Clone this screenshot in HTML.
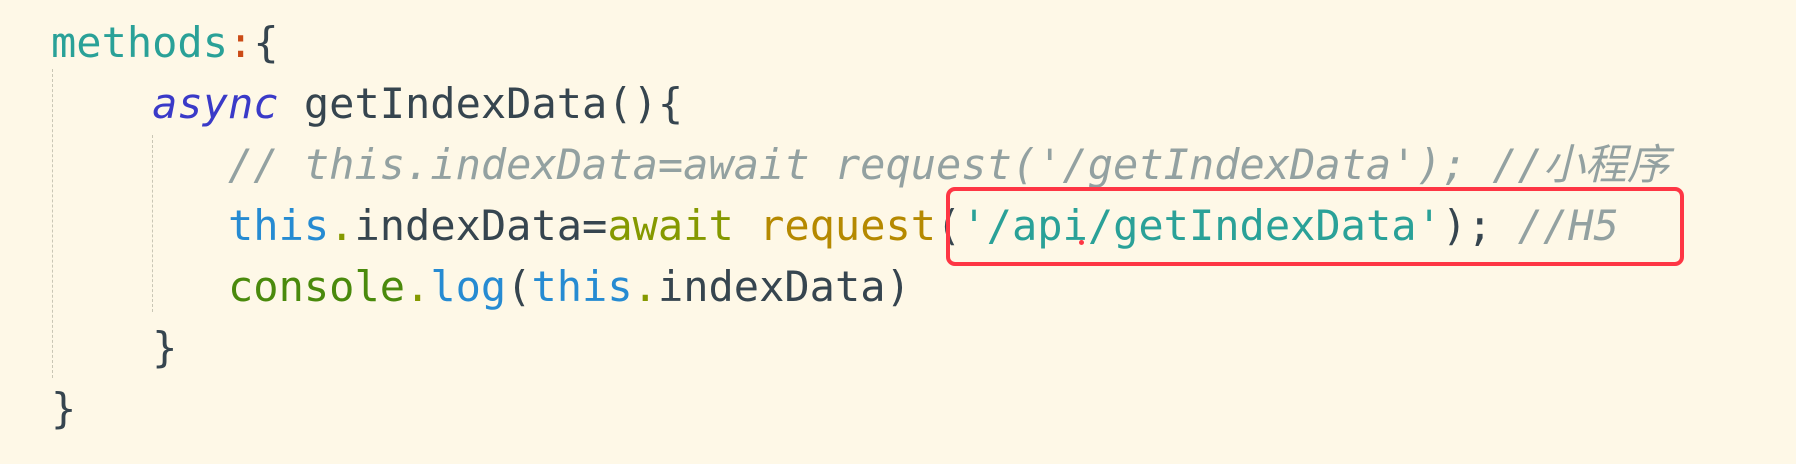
<!DOCTYPE html>
<html><head><meta charset="utf-8"><style>
html,body{margin:0;padding:0;}
body{width:1796px;height:464px;background:#fef8e7;position:relative;overflow:hidden;}
pre{margin:0;position:absolute;left:51px;top:12px;font-family:"DejaVu Sans Mono","Liberation Mono","Noto Sans CJK SC",monospace;font-size:42px;line-height:61px;color:#36454f;}
.c{color:#2aa198}.o{color:#cb4b16}.k{color:#3a3ac8;font-style:italic}.t{color:#268bd2}.g{color:#859900}
.r{color:#b58900}.cm{color:#93a1a1;font-style:italic}.cn{color:#4a8a0c}
.guide{position:absolute;width:0;border-left:1px dashed #c9c6b5;}
.box{position:absolute;left:946px;top:187px;width:730px;height:71px;border:4px solid #fe3644;border-radius:9px;}
.dot{position:absolute;left:1079px;top:240px;width:5px;height:5px;border-radius:50%;background:#fe3644;}
</style></head><body>
<div class="guide" style="left:52px;top:69px;height:309px"></div>
<div class="guide" style="left:152px;top:135px;height:177px"></div>
<pre><span class="c">methods</span><span class="o">:</span>{
    <span class="k">async</span> getIndexData(){
       <span class="cm">// this.indexData=await request('/getIndexData'); //小程序</span>
       <span class="t">this</span><span class="g">.</span>indexData=<span class="g">await</span> <span class="r">request</span>(<span class="c">'/api/getIndexData'</span>); <span class="cm">//H5</span>
       <span class="cn">console</span><span class="g">.</span><span class="t">log</span>(<span class="t">this</span><span class="g">.</span>indexData)
    }
}</pre>
<div class="box"></div>
<div class="dot"></div>
</body></html>
